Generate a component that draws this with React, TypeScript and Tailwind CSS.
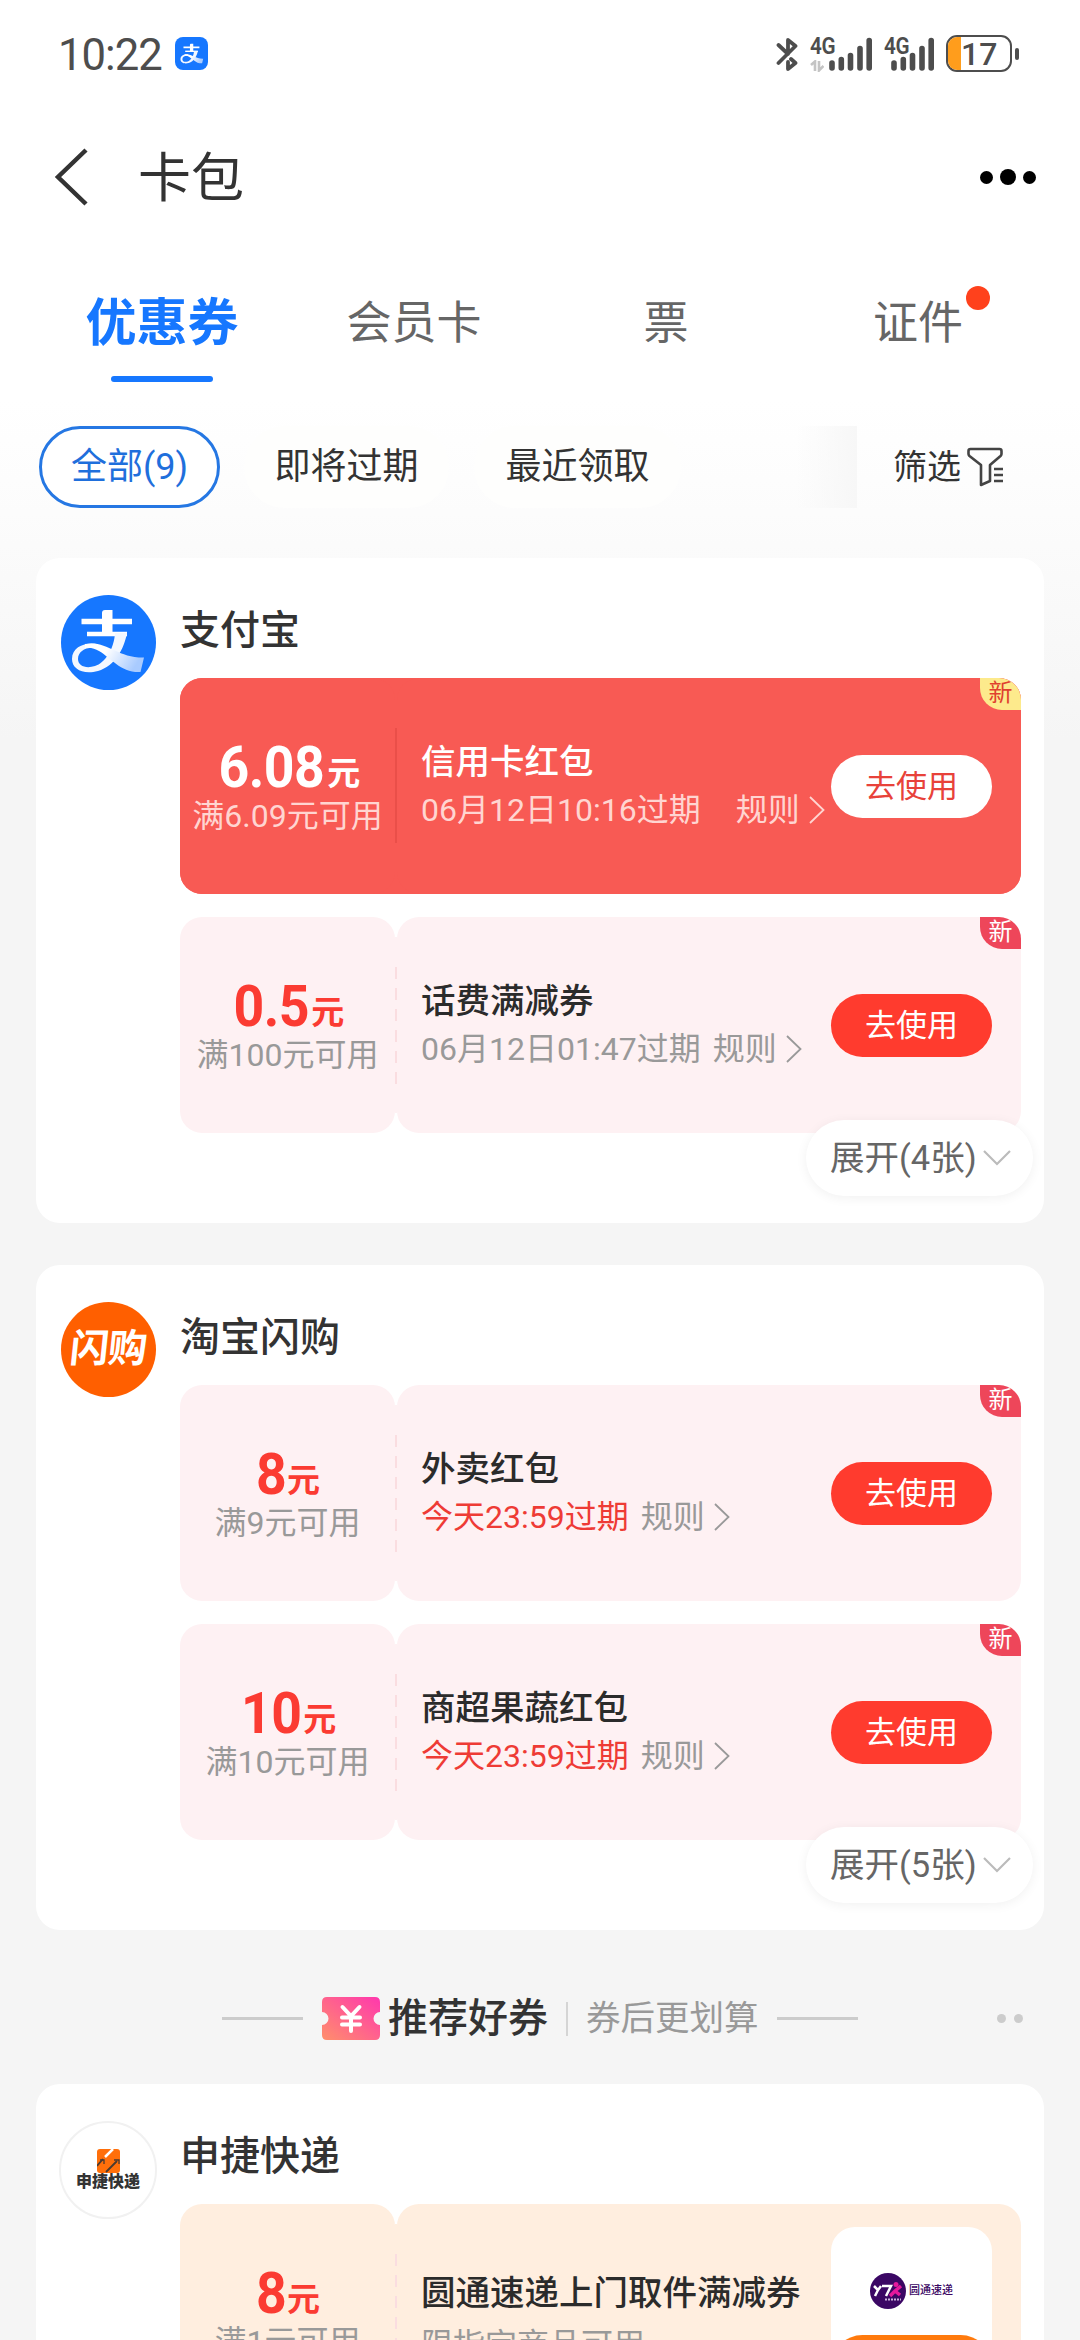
import { ReactNode } from "react";
import clsx from "clsx";

type Tone = "solid" | "pink" | "orange";

interface Coupon {
  amount: string;
  condition: string;
  title: string;
  note: string;
  urgent?: boolean;
  wideGap?: boolean;
  tone: Tone;
  isNew?: boolean;
}

const tabs = ["优惠券", "会员卡", "票", "证件"];

const alipayCoupons: Coupon[] = [
  { amount: "6.08", condition: "满6.09元可用", title: "信用卡红包", note: "06月12日10:16过期", wideGap: true, tone: "solid", isNew: true },
  { amount: "0.5", condition: "满100元可用", title: "话费满减券", note: "06月12日01:47过期", tone: "pink", isNew: true },
];

const taobaoCoupons: Coupon[] = [
  { amount: "8", condition: "满9元可用", title: "外卖红包", note: "今天23:59过期", urgent: true, tone: "pink", isNew: true },
  { amount: "10", condition: "满10元可用", title: "商超果蔬红包", note: "今天23:59过期", urgent: true, tone: "pink", isNew: true },
];

const AlipayMark = ({ className }: { className?: string }) => (
  <svg viewBox="0 0 95 95" className={className} fill="none" stroke="#fff">
    <defs>
      <linearGradient id="ribbon" x1="0" y1="0" x2="1" y2="0.300">
        <stop offset="0.400" stopColor="#fff" />
        <stop offset="1" stopColor="#a9cbff" />
      </linearGradient>
    </defs>
    <path d="M20.500 26.500H71" strokeWidth="5.500" />
    <path d="M26 39H66" strokeWidth="4.500" />
    <path d="M41 18q0-3 3-3h7.500v25H41z" fill="#fff" stroke="none" />
    <path d="M66 38C63 54 54 71 37 76C22 80 11 74 11 64C11 52 24 47 36 49L34 53C24 52 17 57 17 64C17 71 25 74 34 71C44 68 53 54 54 38z" fill="#f3f8ff" stroke="none" />
    <path d="M24 49C46 45 56 63 83 62.500L79.500 77C60 78 50 63 38 56C34 53.500 29 52 24 53z" fill="url(#ribbon)" stroke="none" />
  </svg>
);

const Signal = ({ arrows }: { arrows?: boolean }) => (
  <div className={clsx("relative h-[34px]", arrows ? "w-[62px]" : "w-[50px]")}>
    <span className="absolute -top-[3px] left-0 origin-left scale-x-90 text-[23px] leading-[26px] font-semibold tracking-[-0.500px] text-[#4d4d4d]">4G</span>
    {arrows && (
      <svg viewBox="0 0 14 12" className="absolute top-[23px] left-0 h-[12px] w-[14px]" fill="none" stroke="#c4c4c4" strokeWidth="2.600">
        <path d="M1 5 5 1.500V11M9 1v9.500L13.500 6" />
      </svg>
    )}
    <svg viewBox="0 0 43 34" className="absolute top-0 right-0 h-[34px] w-[43px]" stroke="#4d4d4d" strokeWidth="5.600" strokeLinecap="round">
      <path d="M3 26v5M12.300 22.500V31M21.500 18.500V31M31 11.500V31M40.200 3.500V31" />
    </svg>
  </div>
);

const StatusBar = () => (
  <div className="flex h-[107px] items-center justify-between pr-[61px] pl-[58px]">
    <div className="flex items-center">
      <span className="w-[117px] origin-left scale-x-[0.970] pt-[2px] text-[45px] leading-none tracking-[-1px] text-[#4d4d4d]">10:22</span>
      <span className="flex size-[33px] items-center justify-center rounded-lg bg-[#1677ff]">
        <AlipayMark className="size-[30px]" />
      </span>
    </div>
    <div className="flex items-center">
      <svg viewBox="0 0 22 34" className="mr-3 h-[34px] w-[22px]" fill="none" stroke="#4d4d4d" strokeWidth="3.800" strokeLinecap="round" strokeLinejoin="round">
        <path d="M2.500 8 12 17V3l7.500 6L2.500 26M12 25v7l7.500-6-4.500-4" />
      </svg>
      <Signal arrows />
      <div className="w-3" />
      <Signal />
      <div className="ml-3 flex h-[37px] w-[66px] items-center overflow-hidden rounded-[11px] border-[2.500px] border-[#4d4d4d]">
        <div className="h-full w-[13px] bg-[#ff9d1c]" />
        <span className="text-[32px] leading-none font-medium text-[#4d4d4d]">17</span>
      </div>
      <div className="ml-[3px] h-3 w-[4px] rounded-full bg-[#4d4d4d]" />
    </div>
  </div>
);

const NavBar = () => (
  <div className="flex h-[140px] items-center pr-[44px] pl-[54px]">
    <svg viewBox="0 0 36 58" className="h-[58px] w-9" fill="none" stroke="#333" strokeWidth="4.500">
      <path d="M32 2 4 29l28 27" />
    </svg>
    <h1 className="ml-[48px] pt-[4px] text-[53px] leading-none text-[#333]">卡包</h1>
    <div className="ml-auto flex items-center gap-[7px]">
      <i className="size-[13px] rounded-full bg-black" />
      <i className="size-[16px] rounded-full bg-black" />
      <i className="size-[13px] rounded-full bg-black" />
    </div>
  </div>
);

const TabBar = () => (
  <div className="flex h-[150px] px-9">
    {tabs.map((tab, i) => (
      <div key={tab} className="relative flex flex-1 items-center justify-center pt-[2px]">
        <span className={clsx("relative leading-none", i === 0 ? "text-[51px] font-bold text-[#1677ff]" : "text-[45px] text-[#666]")}>
          {tab}
          {tab === "证件" && <i className="absolute -top-[15px] -right-[27px] size-6 rounded-full bg-[#ff411c]" />}
        </span>
        {i === 0 && <i className="absolute bottom-[15px] h-[6px] w-[102px] rounded-full bg-[#1677ff]" />}
      </div>
    ))}
  </div>
);

const FilterBar = () => (
  <div className="mt-[29px] flex h-[82px] items-center pl-[39px] text-[36px] leading-none text-[#333]">
    <div className="flex h-full w-[181px] items-center justify-center rounded-full border-[3px] border-[#2577e3] bg-white text-[#1f6fdc]">
      全部(9)
    </div>
    <div className="ml-6 flex h-full w-[205px] items-center justify-center rounded-full bg-[#fefefd]">即将过期</div>
    <div className="ml-[25px] flex h-full w-[207px] items-center justify-center rounded-full bg-[#fefefd]">最近领取</div>
    <div className="ml-[115px] h-full w-[61px] bg-gradient-to-r from-[#f5f5f500] to-[#f7f7f7]" />
    <span className="ml-[36px] text-[34px]">筛选</span>
    <svg viewBox="0 0 36 40" className="ml-[6px] h-10 w-9" fill="none" stroke="#444" strokeWidth="2.600" strokeLinejoin="round">
      <path d="M3.500 2h29q2 0 2 2v3q0 1-1 2L23 18v16l-9 4V18L2.500 9q-1-1-1-2V4q0-2 2-2z" />
      <path d="M27 22h9M27 28h9M27 34h9" />
    </svg>
  </div>
);

const Chevron = () => (
  <svg viewBox="0 0 16 28" className="h-7 w-4" fill="none" stroke="currentColor" strokeWidth="1.800">
    <path d="M1 1 14.500 14 1 27" />
  </svg>
);

const YtoCard = () => (
  <div className="mr-[29px] flex h-[171px] w-[161px] flex-col items-center justify-between overflow-hidden rounded-[24px] bg-white">
    <div className="mt-[46px] flex items-center">
      <svg viewBox="0 0 36 36" className="size-9">
        <circle cx="18" cy="18" r="18" fill="#3b0764" />
        <path d="M4 13 8 17 11 13M8 17l-3 6M12 13h9l-5 10" fill="none" stroke="#fff" strokeWidth="2.500" />
        <circle cx="26" cy="11.500" r="2.500" fill="#e5189c" />
        <path d="M20 23 25 18 31 13M25 18l5 4" fill="none" stroke="#e5189c" strokeWidth="3.500" />
        <path d="M15 26.500h16" stroke="#cdb6dc" strokeWidth="2" strokeDasharray="2 1" />
      </svg>
      <span className="ml-[3px] text-[11px] leading-none font-medium text-[#3b0764]">圆通速递</span>
    </div>
    <div className="h-[63px] w-full rounded-full bg-[#ff7a0d]" />
  </div>
);

const CouponRow = ({ coupon, children }: { coupon: Coupon; children?: ReactNode }) => {
  const { tone } = coupon;
  const solid = tone === "solid";
  const bg = tone === "solid" ? "bg-[#f85a54]" : tone === "pink" ? "bg-[#fef1f3]" : "bg-[#ffeedf]";

  return (
    <div className={clsx("relative flex h-[216px] w-[841px] rounded-[22px]", solid && bg)}>
      <div className={clsx("flex w-[215px] flex-col items-center rounded-[22px]", bg)}>
        <div className={clsx("mt-[60px] flex h-[54px] items-baseline font-bold", solid ? "text-white" : "text-[#fb3b32]")}>
          <span className="-mr-[3px] scale-x-[0.940] text-[57px] leading-[60px] tracking-[-0.500px]">{coupon.amount}</span>
          <span className="relative -top-[2px] ml-[3px] text-[33px]">元</span>
        </div>
        <div className={clsx("mt-[8px] text-[32px] leading-[32px] whitespace-nowrap", solid ? "text-[#ffd5d1]" : "text-[#999]")}>
          {coupon.condition}
        </div>
      </div>
      {/* perforation between the two halves */}
      <div className={clsx("my-[20px] flex w-[2px] justify-center pt-[30px]", bg)}>
        {solid ? (
          <i className="h-[115px] w-[3px] shrink-0 bg-[#ea4f49]" />
        ) : (
          <svg viewBox="0 0 3 117" className="h-[117px] w-[3px] shrink-0 overflow-visible">
            <path d="M1.500 0v117" stroke="#fadde0" strokeWidth="3" strokeDasharray="12 9" />
          </svg>
        )}
      </div>
      <div className={clsx("flex flex-1 items-center rounded-[22px]", bg)}>
        <div className="flex-1 self-stretch pl-[24px] whitespace-nowrap">
          <div className={clsx("text-[34.500px] leading-[36px] font-medium", tone === "orange" ? "mt-[71px]" : "mt-[66px]", solid ? "text-white" : "text-[#2b2b2b]")}>
            {coupon.title}
          </div>
          <div className={clsx("flex items-center text-[32px] leading-[32px]", tone === "orange" ? "mt-[18px]" : "mt-[14px]", solid ? "text-[#ffd5d1]" : "text-[#999]")}>
            <span className={clsx(coupon.urgent && "text-[#ee3b35]")}>{coupon.note}</span>
            {tone !== "orange" && (
              <>
                <span className={clsx("mr-[9px]", coupon.wideGap ? "ml-[35px]" : "ml-[12px]")}>规则</span>
                <Chevron />
              </>
            )}
          </div>
        </div>
        {children ?? (
          <button className={clsx("mr-[29px] h-[63px] w-[161px] shrink-0 rounded-full text-[31px] leading-none", solid ? "bg-white text-[#e8423a]" : "bg-[#ff3b2e] text-white")}>
            去使用
          </button>
        )}
      </div>
      {coupon.isNew && (
        <span className={clsx("absolute top-0 right-0 flex h-8 w-[41px] items-center justify-center rounded-tr-[22px] rounded-bl-[22px] pb-[3px] text-[24px] leading-none", solid ? "bg-[#fdea8c] text-[#e0402f]" : "bg-[#ee465a] text-white")}>
          新
        </span>
      )}
    </div>
  );
};

interface ShopCardProps {
  name: string;
  logo: ReactNode;
  more?: string;
  children: ReactNode;
}

const ShopCard = ({ name, logo, more, children }: ShopCardProps) => (
  <section className="relative mx-9 flex h-[665px] shrink-0 rounded-[24px] bg-white">
    <div className="flex w-[144px] justify-center pt-[37px]">{logo}</div>
    <div>
      <h2 className="flex h-[120px] items-center pt-[25px] text-[40px] leading-none font-medium text-[#333]">{name}</h2>
      <div className="flex flex-col gap-[23px]">{children}</div>
    </div>
    {more && (
      <div className="absolute top-[562px] right-[11px] flex h-[76px] w-[227px] items-center rounded-full bg-white pl-[24px] text-[34.500px] leading-none text-[#666] shadow-[0_2px_12px_rgba(0,0,0,0.06)]">
        {more}
        <svg viewBox="0 0 28 16" className="mr-[22px] ml-auto h-4 w-7" fill="none" stroke="#bbb" strokeWidth="2.200">
          <path d="M1 1 14 14 27 1" />
        </svg>
      </div>
    )}
  </section>
);

const RecommendHeader = () => (
  <div className="flex h-[154px] shrink-0 items-center pt-[23px] pl-[222px]">
    <i className="h-[3px] w-[81px] bg-[#ccc]" />
    <svg viewBox="0 0 58 43" className="ml-[19px] h-[43px] w-[58px]">
      <defs>
        <linearGradient id="ticket" x1="0" y1="1" x2="1" y2="0">
          <stop offset="0" stopColor="#ff8f6b" />
          <stop offset="1" stopColor="#ff37ae" />
        </linearGradient>
      </defs>
      <path d="M5 0H53Q58 0 58 5V15A6.500 6.500 0 0 0 58 28V38Q58 43 53 43H5Q0 43 0 38V28A6.500 6.500 0 0 0 0 15V5Q0 0 5 0Z" fill="url(#ticket)" />
      <path d="M20.500 10 29 19 37.500 10M29 19v15M20 20.500h18M20 27.500h18" fill="none" stroke="#fff" strokeWidth="4" strokeLinecap="round" />
    </svg>
    <h2 className="ml-[8px] text-[40px] leading-none font-medium text-[#333]">推荐好券</h2>
    <i className="ml-[18px] h-[34px] w-[2px] bg-[#d5d5d5]" />
    <span className="ml-[18px] text-[34.500px] leading-none text-[#999]">券后更划算</span>
    <i className="ml-[18px] h-[3px] w-[81px] bg-[#ccc]" />
    <div className="mr-[57px] ml-auto flex gap-2">
      <i className="size-[9px] rounded-full bg-[#ccc]" />
      <i className="size-[9px] rounded-full bg-[#ccc]" />
    </div>
  </div>
);

export default function App() {
  return (
    <div className="flex h-[2340px] w-[1080px] flex-col overflow-hidden bg-[#f5f5f5] bg-[linear-gradient(#fff_400px,#fdfdfd_480px,#f5f5f5_740px)] font-[Roboto,'Noto_Sans_CJK_SC',sans-serif]">
      <header className="h-[558px] shrink-0">
        <StatusBar />
        <NavBar />
        <TabBar />
        <FilterBar />
      </header>

      <ShopCard
        name="支付宝"
        more="展开(4张)"
        logo={
          <div className="size-[95px] rounded-full bg-[#1677ff]">
            <AlipayMark className="size-full" />
          </div>
        }
      >
        {alipayCoupons.map((c) => (
          <CouponRow key={c.title} coupon={c} />
        ))}
      </ShopCard>

      <div className="h-[42px] shrink-0" />

      <ShopCard
        name="淘宝闪购"
        more="展开(5张)"
        logo={
          <div className="flex size-[95px] items-center justify-center rounded-full bg-[#ff5f00]">
            <span className="-skew-x-6 text-[39px] leading-none font-bold tracking-[-1px] text-white">闪购</span>
          </div>
        }
      >
        {taobaoCoupons.map((c) => (
          <CouponRow key={c.title} coupon={c} />
        ))}
      </ShopCard>

      <RecommendHeader />

      <ShopCard
        name="申捷快递"
        logo={
          <div className="flex size-[98px] flex-col items-center rounded-full border-2 border-[#f1f1f1] pt-[26px]">
            <svg viewBox="0 0 23 24" className="h-6 w-[23px]">
              <rect width="23" height="24" rx="3" fill="#ff6f0a" />
              <path d="M8 8 16 0" stroke="#fff" strokeWidth="2.500" />
              <path d="M0 17 6 10M9 23 20 12" stroke="#4a3a30" strokeWidth="1.800" />
              <path d="M3 11h4v4M17 11h5v4" fill="none" stroke="#4a3a30" strokeWidth="1.300" />
            </svg>
            <span className="mt-[1px] text-[16px] leading-none font-black whitespace-nowrap text-[#333]">申捷快递</span>
          </div>
        }
      >
        <CouponRow
          coupon={{ amount: "8", condition: "满1元可用", title: "圆通速递上门取件满减券", note: "限指定商品可用", tone: "orange" }}
        >
          <YtoCard />
        </CouponRow>
      </ShopCard>
    </div>
  );
}
